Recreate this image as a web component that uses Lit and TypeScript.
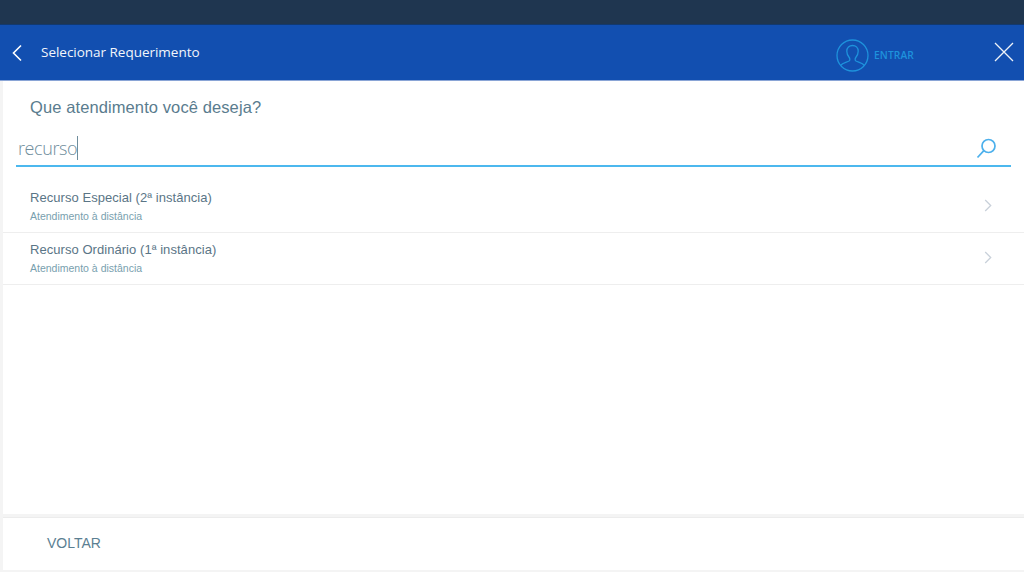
import { LitElement, html, css } from "lit";
import { customElement } from "lit/decorators.js";

@customElement("app-root")
export class AppRoot extends LitElement {
  static styles = css`
    :host { display: block; width: 1024px; height: 572px; overflow: hidden; background: #f4f4f4; font-family: "Liberation Sans", Arial, sans-serif; color: #5b7f92; }
    .top { height: 24px; background: #1f3650; border-bottom: 1px solid #12396f; box-sizing: content-box; }
    .bar { height: 55px; background: #124fb0; display: flex; align-items: center; color: #fff; border-bottom: 1px solid #8aa5d6; }
    .back { margin-left: 11px; width: 12px; height: 18px; display: block; }
    .title { margin-left: 18px; margin-bottom: 2px; font-family: "Open Sans", sans-serif; font-size: 13.5px; font-weight: 400; color: #f2f6fb; flex: 0 0 auto; letter-spacing: -.02px; }
    .spacer { flex: 1; }
    .login { display: flex; align-items: center; gap: 5px; color: #1e92dc; margin-right: 80px; padding-top: 5px; }
    .login svg { display: block; width: 33px; height: 33px; margin-right: 0; }
    .login span { font-family: "Open Sans", sans-serif; font-size: 10.2px; font-weight: 600; letter-spacing: .15px; }
    .close { display: block; width: 20px; height: 20px; margin-right: 10px; margin-bottom: 1px; }
    .page { margin-left: 3px; width: 1021px; height: 491px; display: flex; flex-direction: column; }
    .main { height: 433px; background: #fff; display: flex; flex-direction: column; flex: 0 0 auto; }
    .q { margin: 16px 0 0 27px; font-size: 16.5px; line-height: 20px; letter-spacing: .1px; color: #5a7c8e; }
    .search { margin: 18px 13px 0 13px; height: 30px; border-bottom: 2px solid #4cb8ee; display: flex; align-items: center; position: relative; }
    .typed { margin-left: 2px; margin-top: -5px; font-family: "Open Sans", sans-serif; font-size: 18px; font-weight: 300; color: #6f8d9c; letter-spacing: -.4px; border-right: 1px solid #6f8d9c; line-height: 24px; }
    .search svg { display: block; margin-left: auto; margin-right: 14px; width: 21px; height: 21px; margin-top: -3px; }
    .list { margin-top: 14px; }
    .row { height: 51px; border-bottom: 1px solid #eeeeee; display: flex; align-items: center; padding-left: 27px; padding-right: 32px; }
    .txt { flex: 1; padding-bottom: 2px; }
    .name { font-size: 13px; line-height: 17px; color: #5a7586; letter-spacing: .05px; }
    .sub { margin-top: 3px; font-size: 10.5px; line-height: 14px; color: #78a0ae; }
    .chev { display: block; width: 8px; height: 13px; margin-bottom: 2px; }
    .foot { margin-top: 3px; height: 52px; background: #fff; border-top: 1px solid #ececec; display: flex; align-items: center; }
    .foot span { margin-left: 44px; font-size: 14px; color: #5b7f92; padding-bottom: 2px; }
  `;
  private rows = ["Recurso Especial (2ª instância)", "Recurso Ordinário (1ª instância)"];
  render() {
    return html`
      <div class="top"></div>
      <header class="bar">
        <svg class="back" viewBox="0 0 12 18" fill="none" stroke="#fff" stroke-width="1.6"><path d="M10 1.500 2.500 9l7.500 7.500"/></svg>
        <div class="title">Selecionar Requerimento</div>
        <div class="spacer"></div>
        <div class="login">
          <svg viewBox="0 0 33 33" fill="none" stroke="#1e92dc" stroke-width="1.300">
            <circle cx="16.500" cy="16.500" r="15.500"/>
            <path d="M4.500 26.500c2-2.500 6-3.200 8.500-4.500 1.200-.7 1-2.400.2-3.500-1.500-1.800-2.400-4-2.400-6.300 0-3.600 2.500-5.700 5.700-5.700s5.700 2.100 5.700 5.700c0 2.300-.9 4.500-2.400 6.300-.8 1.100-1 2.800.2 3.500 2.500 1.300 6.500 2 8.500 4.500"/>
          </svg>
          <span>ENTRAR</span>
        </div>
        <svg class="close" viewBox="0 0 20 20" stroke="#eef3f8" stroke-width="1.300" fill="none"><path d="M1 1l18 18M19 1 1 19"/></svg>
      </header>
      <div class="page">
        <div class="main">
          <div class="q">Que atendimento você deseja?</div>
          <div class="search">
            <span class="typed">recurso</span>
            <svg viewBox="0 0 21 21" fill="none" stroke="#4cb0ec" stroke-width="1.700"><circle cx="12.500" cy="8" r="6.500"/><path d="M7.800 12.700 1.500 19.500"/></svg>
          </div>
          <div class="list">
            ${this.rows.map(r => html`
              <div class="row">
                <div class="txt"><div class="name">${r}</div><div class="sub">Atendimento à distância</div></div>
                <svg class="chev" viewBox="0 0 8 13" fill="none" stroke="#c9d1da" stroke-width="1.300"><path d="M1.200 1 6.700 6.500l-5.500 5.500"/></svg>
              </div>`)}
          </div>
        </div>
        <div class="foot"><span>VOLTAR</span></div>
      </div>
    `;
  }
}
